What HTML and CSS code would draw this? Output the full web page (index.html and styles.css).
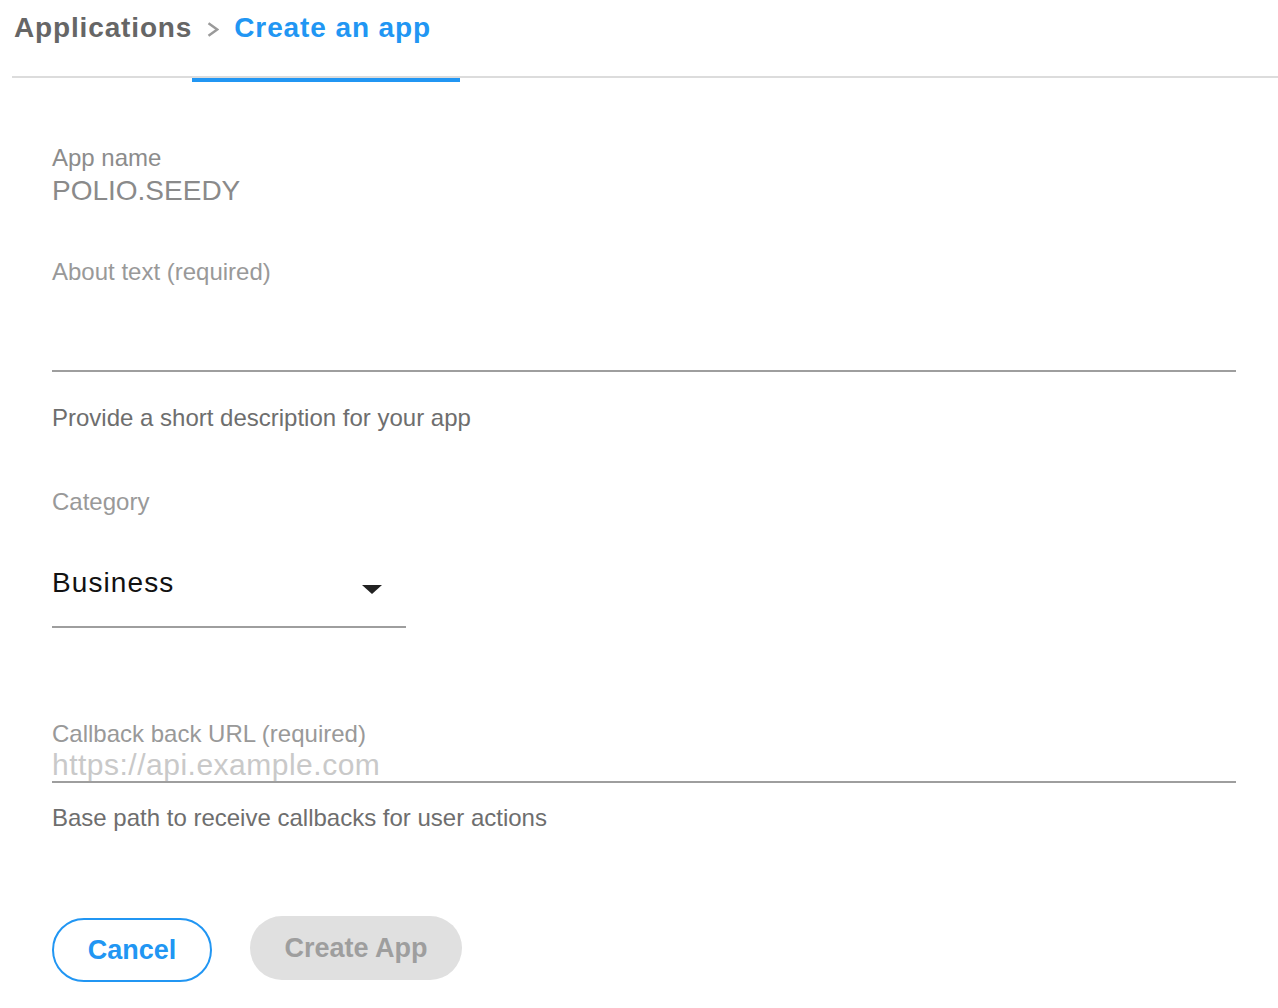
FILE: index.html
```html
<!DOCTYPE html>
<html lang="en">
<head>
<meta charset="utf-8">
<title>Create an app</title>
<link rel="stylesheet" href="styles.css">
</head>
<body>
<div class="page">
  <header class="header">
    <nav class="crumbs">
      <span class="crumb-root">Applications</span>
      <svg class="chev" width="12" height="15" viewBox="0 0 12 15"><polyline points="1.5,1.2 10.2,7.5 1.5,13.8" fill="none" stroke="#9a9a9a" stroke-width="2.4"/></svg>
      <span class="crumb-current">Create an app</span>
    </nav>
  </header>
  <div class="tab-indicator"></div>

  <form class="form">
    <div class="field">
      <div class="label">App name</div>
      <div class="static-value">POLIO.SEEDY</div>
    </div>

    <div class="field about">
      <div class="label">About text (required)</div>
      <div class="textarea"></div>
      <div class="helper">Provide a short description for your app</div>
    </div>

    <div class="field category">
      <div class="label">Category</div>
      <div class="select">
        <span class="select-value">Business</span>
        <span class="caret"></span>
      </div>
    </div>

    <div class="field callback">
      <div class="label">Callback back URL (required)</div>
      <div class="input"><span class="placeholder">https://api.example.com</span></div>
      <div class="helper helper-url">Base path to receive callbacks for user actions</div>
    </div>

    <div class="actions">
      <button type="button" class="btn btn-outline">Cancel</button>
      <button type="button" class="btn btn-disabled">Create App</button>
    </div>
  </form>
</div>
</body>
</html>
```

FILE: styles.css
```css
* { box-sizing: border-box; }

html, body {
  margin: 0;
  padding: 0;
  background: #fff;
}

body {
  font-family: "Liberation Sans", Arial, Helvetica, sans-serif;
  color: #333;
}

.page {
  padding-left: 12px;
}

.header {
  height: 78px;
  border-bottom: 2px solid #dcdcdc;
  padding: 11px 0 0 2px;
}

.crumbs {
  display: flex;
  align-items: center;
  height: 34px;
  font-size: 28px;
  font-weight: bold;
  line-height: 34px;
}

.crumb-root {
  color: #666;
  letter-spacing: 0.85px;
}

.chev {
  margin: 2px 15px 0 15px;
}

.crumb-current {
  color: #2196f3;
  letter-spacing: 0.9px;
}

.tab-indicator {
  margin-left: 180px;
  width: 268px;
  height: 4px;
  background: #2196f3;
}

.form {
  margin: 0 42px 0 40px;
  padding-top: 62px;
}

.label {
  font-size: 24px;
  line-height: 28px;
  color: #999;
}

.field:first-child .label {
  color: #8c8c8c;
}

.static-value {
  margin-top: 3px;
  font-size: 28px;
  line-height: 32px;
  color: #8a8a8a;
}

.about {
  margin-top: 51px;
}

.textarea {
  height: 86px;
  border-bottom: 2px solid #9e9e9e;
}

.helper {
  margin-top: 32px;
  font-size: 24px;
  line-height: 28px;
  color: #6e6e6e;
}

.category {
  margin-top: 56px;
}

.select {
  display: flex;
  align-items: center;
  justify-content: space-between;
  width: 354px;
  margin-top: 51px;
  padding-bottom: 27px;
  border-bottom: 2px solid #9e9e9e;
}

.select-value {
  font-size: 28px;
  line-height: 32px;
  color: #111;
  letter-spacing: 1.1px;
}

.caret {
  width: 0;
  height: 0;
  margin: 12px 24px 0 0;
  border-left: 10px solid transparent;
  border-right: 10px solid transparent;
  border-top: 9px solid #222;
}

.callback {
  margin-top: 92px;
}

.input {
  height: 35px;
  border-bottom: 2px solid #9e9e9e;
}

.placeholder {
  display: block;
  font-size: 30px;
  line-height: 34px;
  color: #c9c9c9;
  letter-spacing: 0.5px;
}

.helper-url {
  margin-top: 21px;
}

.actions {
  display: flex;
  align-items: flex-start;
  gap: 38px;
  margin-top: 84px;
}

.btn {
  height: 64px;
  border-radius: 32px;
  font-family: "Liberation Sans", Arial, Helvetica, sans-serif;
  font-size: 27px;
  font-weight: bold;
  padding: 0;
  cursor: pointer;
}

.btn-outline {
  width: 160px;
  margin-top: 2px;
  background: #fff;
  border: 2px solid #2196f3;
  color: #2196f3;
}

.btn-disabled {
  width: 212px;
  background: #e0e0e0;
  border: none;
  color: #9e9e9e;
  cursor: default;
}
```
